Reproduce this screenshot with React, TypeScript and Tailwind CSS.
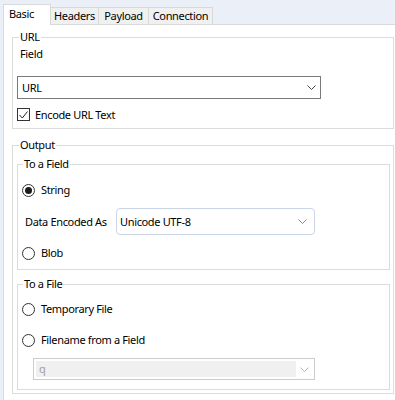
import React from 'react';

const Chevron = ({ color = '#555' }: { color?: string }) => (
  <svg width="9" height="5" viewBox="0 0 9 5" fill="none">
    <path d="M0.5 0.5 L4.5 4.5 L8.5 0.5" stroke={color} strokeWidth="1" />
  </svg>
);

const Radio = ({ checked, label }: { checked?: boolean; label: string }) => (
  <div className="flex h-[16px] items-center">
    <span className="flex h-[13px] w-[13px] items-center justify-center rounded-full border border-[#333] bg-white">
      {checked && <span className="h-[7px] w-[7px] rounded-full bg-[#1a1a1a]" />}
    </span>
    <span className="ml-[6px] leading-[16px]">{label}</span>
  </div>
);

const App = () => {
  const tabs = [
    { name: 'Headers', w: 'w-[48px]' },
    { name: 'Payload', w: 'w-[50px]' },
    { name: 'Connection', w: 'w-[64px]' },
  ];

  return (
    <div className="w-[395px] h-[400px] overflow-hidden bg-[#eaeff8] font-['Noto_Sans',sans-serif] text-[11px] tracking-[-0.35px] text-black">
      {/* Tab strip */}
      <div className="flex h-[24px] items-end pl-[3px]">
        <div className="relative z-10 -mb-px flex h-[21px] w-[48px] items-start border border-b-0 border-[#d9d9d9] bg-white pl-[5px] pt-[1px] leading-[16px]">
          Basic
        </div>
        {tabs.map((t) => (
          <div
            key={t.name}
            className={`flex h-[17px] ${t.w} items-center justify-center border border-l-0 border-b-0 border-[#d9d9d9] bg-[#f0f0f0] leading-[16px]`}
          >
            {t.name}
          </div>
        ))}
      </div>

      {/* Panel */}
      <div className="ml-[3px] h-[376px] border-l border-t border-[#d9d9d9] bg-white">
        {/* URL group */}
        <fieldset className="ml-[8px] mt-[4px] w-[382px] border border-[#dcdcdc] pl-[4px] pb-[7px]">
          <legend className="ml-[2px] px-[1px] leading-[16px]">URL</legend>
          <div className="ml-[3px] mt-[1px] leading-[16px]">Field</div>
          <div className="mt-[14px] flex h-[23px] w-[304px] items-center justify-between border border-[#7a7a7a] bg-white pl-[4px] pr-[4px]">
            <span className="leading-[16px]">URL</span>
            <Chevron color="#444" />
          </div>
          <div className="mt-[9px] flex h-[13px] items-center">
            <span className="flex h-[13px] w-[13px] items-center justify-center border border-[#333] bg-white">
              <svg width="9" height="8" viewBox="0 0 9 8" fill="none">
                <path d="M0.5 4 L3.3 7 L8.5 0.5" stroke="#222" strokeWidth="1" />
              </svg>
            </span>
            <span className="ml-[5px] leading-[16px]">Encode URL Text</span>
          </div>
        </fieldset>

        {/* Output group */}
        <fieldset className="ml-[8px] mt-[8px] w-[382px] border border-[#dcdcdc] pl-[4px] pr-[3px] pb-[3px]">
          <legend className="ml-[2px] px-[1px] leading-[16px]">Output</legend>

          <fieldset className="mt-[3px] border border-[#dcdcdc] pl-[4px] pb-[8px]">
            <legend className="ml-[1px] px-[1px] leading-[16px]">To a Field</legend>
            <div className="mt-[10px]">
              <Radio checked label="String" />
            </div>
            <div className="mt-[10px] flex h-[27px] items-center">
              <span className="ml-[3px] w-[91px] leading-[16px]">Data Encoded As</span>
              <div className="flex h-[27px] w-[199px] items-center justify-between rounded-[4px] border border-[#c9d4e6] bg-white pl-[3px] pr-[7px]">
                <span className="leading-[16px]">Unicode UTF-8</span>
                <Chevron color="#8a8a8a" />
              </div>
            </div>
            <div className="mt-[10px]">
              <Radio label="Blob" />
            </div>
          </fieldset>

          <fieldset className="mt-[6px] border border-[#dcdcdc] pl-[4px] pb-[9px]">
            <legend className="ml-[1px] px-[1px] leading-[16px]">To a File</legend>
            <div className="mt-[9px]">
              <Radio label="Temporary File" />
            </div>
            <div className="mt-[15px]">
              <Radio label="Filename from a Field" />
            </div>
            <div className="ml-[11px] mt-[10px] flex h-[22px] w-[282px] items-center border border-[#cccccc] bg-white p-[2px]">
              <div className="flex h-full flex-1 items-center bg-[#f0f0f0] pl-[3px] text-[#a0a0a0] leading-[16px]">q</div>
              <div className="flex w-[16px] items-center justify-center">
                <Chevron color="#b5b5b5" />
              </div>
            </div>
          </fieldset>
        </fieldset>
      </div>
    </div>
  );
};

export default App;
